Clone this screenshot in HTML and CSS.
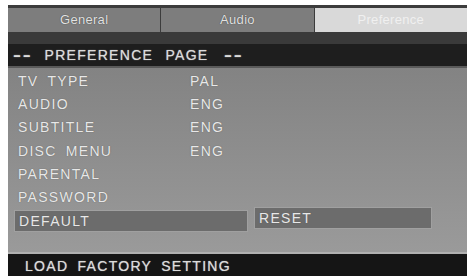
FILE: index.html
```html
<!DOCTYPE html>
<html lang="en">
<head>
  <meta charset="UTF-8">
  <title>Preference Page</title>
  <link rel="stylesheet" href="styles.css">
</head>
<body>

  <div class="osd">
    <div class="tabs">
      <div class="tab">General</div>
      <div class="tab">Audio</div>
      <div class="tab active">Preference</div>
    </div>
    <div class="gap-band"></div>
    <div class="page-title"><span class="dash">--</span> PREFERENCE PAGE <span class="dash">--</span></div>

    <div class="menu">
      <div class="row"><span class="label">TV TYPE</span><span class="value">PAL</span></div>
      <div class="row"><span class="label">AUDIO</span><span class="value">ENG</span></div>
      <div class="row"><span class="label">SUBTITLE</span><span class="value">ENG</span></div>
      <div class="row"><span class="label">DISC MENU</span><span class="value">ENG</span></div>
      <div class="row"><span class="label">PARENTAL</span></div>
      <div class="row"><span class="label">PASSWORD</span></div>
      <div class="row selected">
        <span class="label box">DEFAULT</span>
        <span class="sub box">RESET</span>
      </div>
    </div>

    <div class="status">LOAD FACTORY SETTING</div>
  </div>

</body>
</html>
```

FILE: styles.css
```css
body {
  margin: 0;
  background-color: #ffffff;
  font-family: 'Liberation Sans', Arial, sans-serif;
}

.osd {
  width: 459px;
  height: 271px;
  margin: 5px 0 0 8px;
  background-color: #8a8a8a;
  display: flex;
  flex-direction: column;
}

.tabs {
  display: flex;
  height: 24px;
  border-top: 3px solid #3c3c3c;
  background-color: #3c3c3c;
  gap: 1px;
}

.tab {
  flex: 1;
  background-color: #7d7d7d;
  color: #e2e2e2;
  font-size: 13px;
  letter-spacing: 0.3px;
  text-align: center;
  line-height: 23px;
  text-shadow: 0 0 1px #333;
}

.tab.active {
  background-color: #d9d9d9;
  color: #f0f0f0;
  text-shadow: none;
}

.gap-band {
  height: 12px;
  background-color: #3a3a3a;
}

.page-title {
  height: 22px;
  line-height: 22px;
  background-color: #1e1e1e;
  color: #dcdcdc;
  font-size: 14px;
  letter-spacing: 1.3px;
  word-spacing: 7px;
  padding-left: 2px;
  border-bottom: 2px solid #5a5a5a;
  text-shadow: 0 0 1px #aaa;
}

/* the OSD font draws wide dashes */
.dash {
  display: inline-block;
  font-weight: bold;
  letter-spacing: 1px;
  transform: scaleX(1.7);
  margin: 0 4px 0 7px;
}

.menu {
  flex: 1;
  background: linear-gradient(#838383, #9a9a9a);
  padding: 1px 0 0 6px;
}

.row {
  display: flex;
  align-items: center;
  height: 23.3px;
  color: #e8e8e8;
  font-size: 14px;
  letter-spacing: 1.3px;
  word-spacing: 4px;
  text-shadow: 0 0 1px #555;
}

.label {
  width: 172px;
  padding-left: 4px;
}

.row.selected {
  margin-top: -2px;
  align-items: flex-start;
  height: 26px;
}

.box {
  background-color: #6c6c6c;
  border: 1px solid #a0a0a0;
  height: 20px;
  line-height: 20px;
  margin-top: 3px;
}

.label.box {
  width: 228px;
}

.sub.box {
  width: 172px;
  margin-left: 6px;
  margin-top: 0;
  padding-left: 4px;
}

.status {
  height: 22px;
  line-height: 24px;
  background-color: #151515;
  border-top: 2px solid #b0b0b0;
  color: #dcdcdc;
  font-size: 14px;
  letter-spacing: 1.3px;
  word-spacing: 4px;
  padding-left: 17px;
  text-shadow: 0 0 1px #aaa;
}
```
